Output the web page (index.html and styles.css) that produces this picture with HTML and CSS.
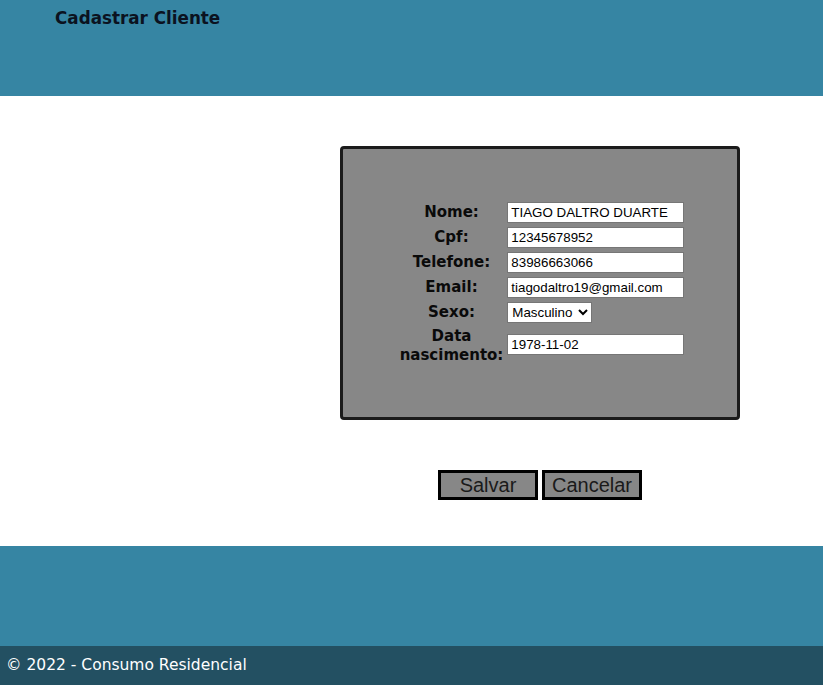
FILE: index.html
```html
<!DOCTYPE html>
<html lang="pt-BR">
<head>
<meta charset="utf-8">
<title>Cadastrar Cliente</title>
<link rel="stylesheet" href="styles.css">
</head>
<body>
<header class="top">
  <h1 class="title">Cadastrar Cliente</h1>
</header>
<main class="content">
  <div class="card">
    <table class="form">
      <tr><th><label>Nome:</label></th><td><input class="field" type="text" value="TIAGO DALTRO DUARTE"></td></tr>
      <tr><th><label>Cpf:</label></th><td><input class="field" type="text" value="12345678952"></td></tr>
      <tr><th><label>Telefone:</label></th><td><input class="field" type="text" value="83986663066"></td></tr>
      <tr><th><label>Email:</label></th><td><input class="field" type="text" value="tiagodaltro19@gmail.com"></td></tr>
      <tr><th><label>Sexo:</label></th><td><select class="choice"><option>Masculino</option><option>Feminino</option></select></td></tr>
      <tr><th class="wrap"><label>Data nascimento:</label></th><td class="raise"><input class="field" type="text" value="1978-11-02"></td></tr>
    </table>
  </div>
  <div class="actions">
    <button class="btn">Salvar</button>
    <button class="btn">Cancelar</button>
  </div>
</main>
<footer class="bottom">
  <div class="band"></div>
  <div class="copy">© 2022 - Consumo Residencial</div>
</footer>
</body>
</html>
```
FILE: styles.css
```css
html, body {
  margin: 0;
  padding: 0;
}
body {
  background: #ffffff;
  font-family: "DejaVu Sans", "Open Sans", sans-serif;
}
.top {
  height: 96px;
  background: #3685a3;
  box-sizing: border-box;
  padding: 8px 0 0 55px;
}
.title {
  margin: 0;
  font-size: 16.8px;
  font-weight: bold;
  color: #0b1220;
  line-height: 21px;
}
.content {
  height: 450px;
  box-sizing: border-box;
  padding: 50px 0 0 257px;
  display: flex;
  flex-direction: column;
  align-items: center;
}
.card {
  width: 400px;
  height: 274px;
  box-sizing: border-box;
  background: #878787;
  border: 3px solid #1b1b1b;
  border-radius: 4px;
  display: flex;
  justify-content: center;
  padding: 50px 0 0 4px;
}
.form {
  align-self: flex-start;
}
.form th {
  font-size: 15px;
  font-weight: bold;
  color: #0a0a0a;
  text-align: center;
  width: 100px;
  line-height: 19px;
}
.raise {
  padding-bottom: 5px;
}
.field {
  width: 177px;
  height: 21px;
  box-sizing: border-box;
  border: 1px solid #767676;
  padding: 1px 3px;
  font-family: "Liberation Sans", Arial, sans-serif;
  font-size: 13.333px;
  background: #fff;
  color: #000;
  margin: 0;
  display: block;
}
.choice {
  width: 85px;
  height: 21px;
  box-sizing: border-box;
  border: 1px solid #767676;
  font-family: "Liberation Sans", Arial, sans-serif;
  font-size: 13.333px;
  background: #fff;
  color: #000;
  margin: 0;
  display: block;
}
.actions {
  margin-top: 50px;
  display: flex;
  gap: 4px;
}
.btn {
  width: 100px;
  height: 30px;
  box-sizing: border-box;
  border: 3px solid #000;
  background: #878787;
  font-family: "Liberation Sans", Arial, sans-serif;
  font-size: 20px;
  color: #1a1a1a;
  padding: 0;
  margin: 0;
}
.band {
  height: 100px;
  background: #3685a3;
}
.copy {
  height: 39px;
  background: #235062;
  color: #ffffff;
  font-size: 15.5px;
  line-height: 39px;
  padding-left: 6px;
}
```
